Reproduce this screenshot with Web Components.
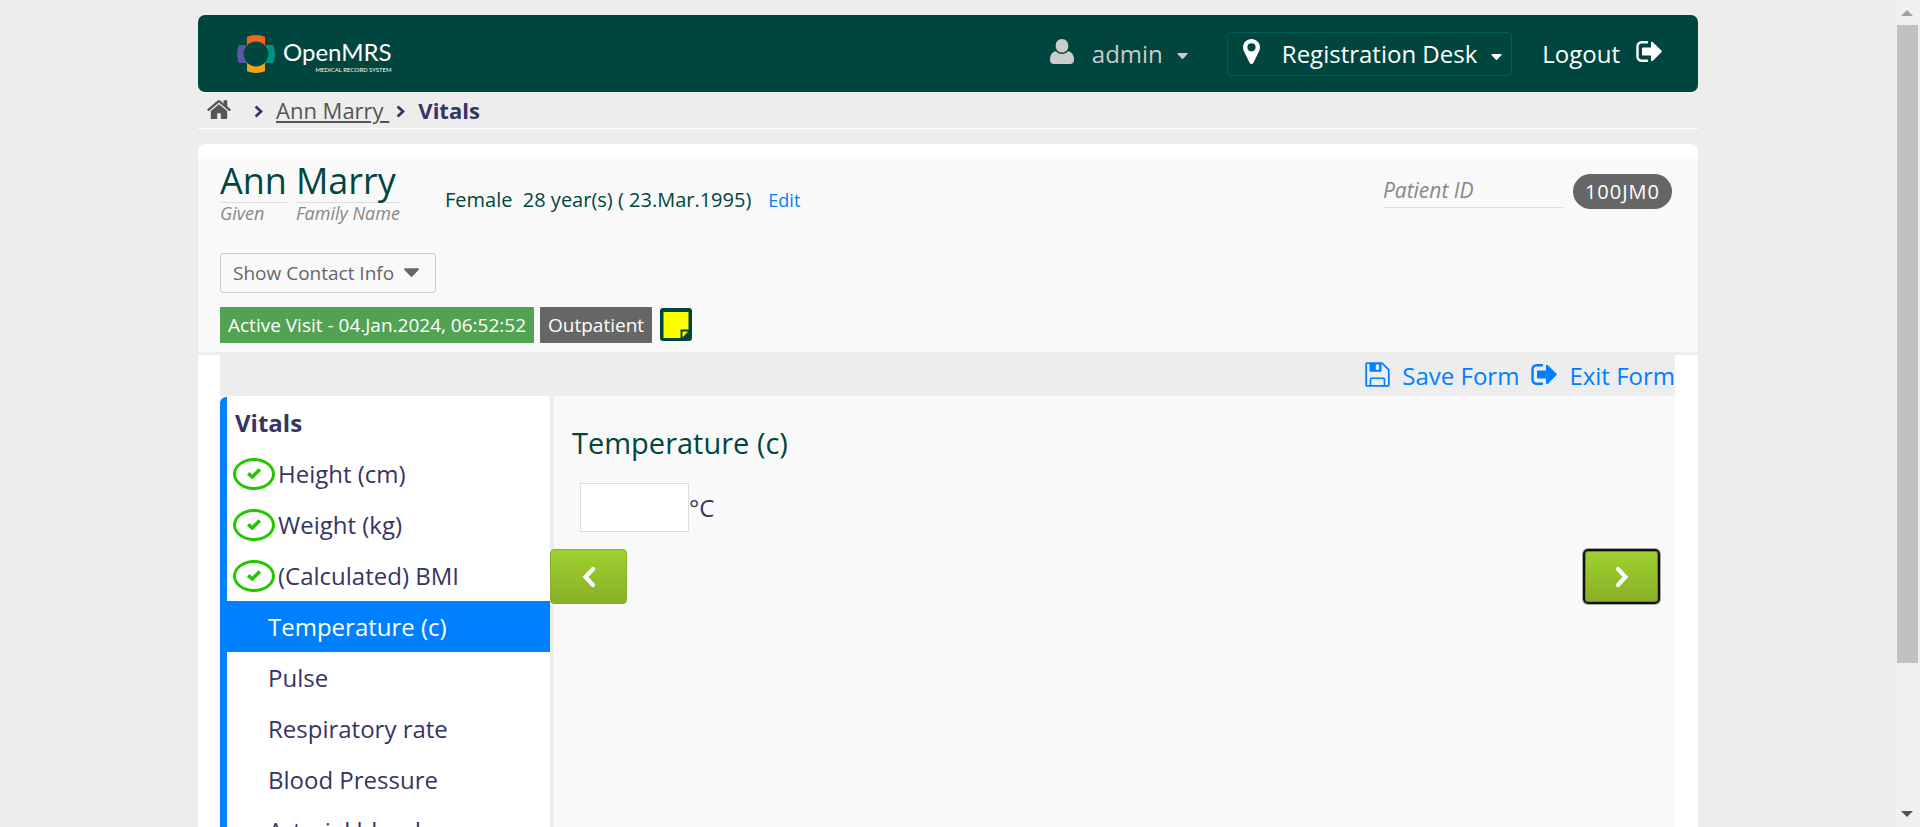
<!DOCTYPE html>
<html lang="en">
<head>
<meta charset="utf-8">
<title>OpenMRS - Vitals</title>
<style>
  html, body { margin: 0; height: 100%; overflow: hidden; }
  body { font-family: "Open Sans", "Noto Sans", sans-serif; font-weight: 400; background: #ededed; color: #363463; }
</style>
</head>
<body>
<emr-app></emr-app>

<script>
const ICONS = {
  user: ['0 0 24 25', '<path d="M12 0c4 0 6.300 3 6.300 7S15.500 13.500 12 13.500 5.700 11 5.700 7 8 0 12 0zM6 12.300C7.600 14 9.500 15 12 15s4.400-1 6-2.700c4 .7 6 3.700 6 8.700 0 2.500-1.500 4-4 4H4c-2.500 0-4-1.500-4-4 0-5 2-8 6-8.700z"/>'],
  pin: ['0 0 17 25', '<path fill-rule="evenodd" d="M8.500 0C13.200 0 17 3.600 17 8.300c0 1.300-.2 2.400-.7 3.400l-6 12.200c-.7 1.400-2.900 1.400-3.600 0l-6-12.200C.2 10.700 0 9.600 0 8.300 0 3.600 3.800 0 8.500 0zm0 4.200a4.100 4.100 0 1 0 0 8.200 4.100 4.100 0 0 0 0-8.200z"/>'],
  exit: ['0 0 26 21', '<path d="M11 1.300H5.500A4 4 0 0 0 1.500 5.300v10.400a4 4 0 0 0 4 4H11" fill="none" stroke="currentColor" stroke-width="2.400" stroke-linecap="round"/><path d="M7 6.500h8V2c0-1.200 1-1.500 1.900-.7l8.500 8.300c.5.500.5 1.200 0 1.700L16.900 19.700c-.9.800-1.900.4-1.900-.7v-4.500H7c-.6 0-1-.4-1-1v-6c0-.6.400-1 1-1z"/>'],
  home: ['0 0 24 19', '<path d="M12 4.300 3.800 11v7c0 .6.400 1 1 1h5.400v-5.800h3.600V19h5.400c.6 0 1-.4 1-1v-7z"/><path d="M23.700 9.200 20.300 6.400V.7c0-.3-.2-.5-.5-.5h-2.700c-.3 0-.5.200-.5.500v2.700L13.300.6c-.8-.6-1.800-.6-2.600 0L.3 9.200c-.2.200-.2.500 0 .7l.9 1c.2.200.5.200.7 0L12 2.600l10.100 8.300c.2.200.5.200.7 0l.9-1c.2-.2.200-.5 0-.7z"/>'],
  right: ['0 0 9 13', '<path d="M1.600 1.500 7 6.500 1.600 11.500" fill="none" stroke="currentColor" stroke-width="2.800"/>'],
  caret: ['0 0 12 7', '<path d="M1 0h10c.9 0 1.200.8.600 1.400L6.700 6.600c-.4.4-1 .4-1.400 0L.4 1.400C-.2.800.100 0 1 0z"/>'],
  save: ['0 0 25 25', '<path d="M1.200 2.200c0-.6.400-1 1-1H17l6.800 6.600v15c0 .6-.4 1-1 1H2.200c-.6 0-1-.4-1-1z" fill="none" stroke="currentColor" stroke-width="1.800"/><path d="M5.500 23.500v-6c0-.8.400-1.200 1.200-1.200h11.600c.8 0 1.200.4 1.200 1.200v6M15 1.500v6.200c0 .7-.4 1-1 1" fill="none" stroke="currentColor" stroke-width="1.600"/><path fill-rule="evenodd" d="M4.500 1h12v7.500c0 .8-.6 1.300-1.300 1.300H5.800c-.7 0-1.300-.5-1.300-1.300zM10.800 2.500v5.300h3.800V2.500z"/>'],
  check: ['0 0 14 11', '<path d="M1.200 5.300 5.300 9 12.800 1.400" fill="none" stroke="currentColor" stroke-width="3.600"/>'],
  prev: ['0 0 14 22', '<path d="M11 3 3.500 11 11 19" fill="none" stroke="currentColor" stroke-width="4.200" stroke-linecap="round"/>'],
  next: ['0 0 14 22', '<path d="M3 3l7.500 8L3 19" fill="none" stroke="currentColor" stroke-width="4.200" stroke-linecap="round"/>'],
  note: ['0 0 32 33', '<rect width="32" height="33" rx="3" fill="#00463f"/><path d="M3.500 4h25v17.500H20.500V30h-17z" fill="#ff0"/><path d="M22.500 23.500h5.500l-5.500 6z" fill="#ff0"/>'],
  emblem: ['0 0 38 38', '<path d="M10 1.800Q19-1.600 28 1.800V11H10z" fill="#f26522"/><path d="M10 36.200q9 3.400 18 0V27H10z" fill="#eea616"/><path d="M1.800 10q-3.400 9 0 18H11V10z" fill="#5b57a6"/><path d="M36.200 10q3.400 9 0 18H27V10z" fill="#009384"/><circle cx="19" cy="19" r="12.400" fill="#00463f"/>']
};

function define(name, css, html) {
  const template = document.createElement('template');
  template.innerHTML = `<style>*{box-sizing:border-box}a{color:inherit;text-decoration:none}button,input{font:inherit;color:inherit;margin:0}${css}</style>${html}`;
  customElements.define(name, class extends HTMLElement {
    constructor() {
      super();
      this.attachShadow({ mode: 'open' }).append(template.content.cloneNode(true));
    }
  });
}

customElements.define('emr-icon', class extends HTMLElement {
  connectedCallback() {
    if (this.shadowRoot) return;
    const [box, shapes] = ICONS[this.getAttribute('name')];
    const [, , w, h] = box.split(' ');
    this.attachShadow({ mode: 'open' }).innerHTML =
      `<style>:host{display:inline-block;flex:none;line-height:0}svg{display:block;fill:currentColor}</style>
       <svg viewBox="${box}" width="${this.getAttribute('width') || w}" height="${this.getAttribute('height') || h}" aria-hidden="true">${shapes}</svg>`;
  }
});

define('emr-logo', `
  :host { display: block; }
  a { display: flex; gap: 8px; align-items: center; color: #fff; }
  .words { display: flex; flex-direction: column; align-items: flex-end; font-family: Lato, sans-serif; padding-top: 3px; }
  .name { font-size: 24px; line-height: 29px; }
  .sub { font-size: 6px; line-height: 7px; }
`, `<a href="#"><emr-icon name="emblem"></emr-icon>
  <span class="words"><span class="name">OpenMRS</span><span class="sub">MEDICAL RECORD SYSTEM</span></span></a>`);

define('emr-header', `
  :host { display: flex; align-items: center; justify-content: space-between; height: 77px; padding: 0 36px 0 39px;
    background: #00463f; border-radius: 7px; color: #fff; font-size: 24px; line-height: 32px; }
  nav { display: flex; align-items: center; }
  button { display: flex; align-items: center; background: none; border: 1px solid transparent; border-radius: 4px; height: 44px; padding: 0; }
  .user { color: #ccc; gap: 18px; margin-right: 38px; }
  .place { border-color: #005f56; padding: 0 9px 0 15px; gap: 22px; margin-right: 30px; }
  .user emr-icon:last-child { margin: 5px 0 0 -4px; }
  .place emr-icon:last-child { margin: 6px 0 0 -8px; }
  .user emr-icon:first-child, .place emr-icon:first-child { margin-bottom: 4px; }
  .out { display: flex; align-items: center; gap: 16px; }
  .out emr-icon { margin-bottom: 4px; }
`, `<emr-logo></emr-logo>
  <nav>
    <button class="user"><emr-icon name="user"></emr-icon>admin<emr-icon name="caret" width="11" height="6"></emr-icon></button>
    <button class="place"><emr-icon name="pin"></emr-icon>Registration Desk<emr-icon name="caret" width="11" height="6"></emr-icon></button>
    <a class="out" href="#">Logout<emr-icon name="exit"></emr-icon></a>
  </nav>`);

define('emr-breadcrumbs', `
  :host { display: flex; align-items: center; height: 37px; padding: 0 9px; border-bottom: 1px solid #fff; font-size: 22px; line-height: 30px; }
  a { color: #555; }
  .home { margin-right: 23px; }
  .person { text-decoration: underline; white-space: pre; margin: 0 7px 0 13px; }
  b { font-weight: 700; margin-left: 13px; }
  emr-icon[name=right] { margin-top: 2px; }
`, `<a class="home" href="#" aria-label="Home"><emr-icon name="home"></emr-icon></a><emr-icon name="right"></emr-icon><a class="person" href="#">Ann Marry </a><emr-icon name="right"></emr-icon><b>Vitals</b>`);

define('emr-patient', `
  :host { display: block; background: #f9f9f9; padding: 0 26px 9px 22px; height: 193px; color: #00463f; }
  .top { display: flex; align-items: flex-start; height: 94px; }
  h1 { margin: 0; display: flex; gap: 9px; font-size: 36px; line-height: 43px; font-weight: 400; }
  h1 span { display: block; }
  h1 i { display: block; border-top: 1px solid #ddd; color: #888; font-size: 18px; line-height: 20px; }
  .facts { margin: 27px 0 0 45px; font-size: 20px; line-height: 28px; white-space: pre; }
  .facts a { color: #007fff; font-size: 18px; margin-left: 17px; }
  .id { margin: 15px 0 0 auto; display: flex; gap: 10px; }
  .id i { width: 180px; height: 34px; border-bottom: 1px solid #ddd; color: #888; font-size: 21px; line-height: 32px; }
  .id b { height: 35px; padding: 0 12px; border-radius: 18px; background: #666; color: #fff; font-size: 20px; font-weight: 400; line-height: 35px; letter-spacing: 1px; }
  button { display: flex; align-items: center; gap: 10px; height: 40px; padding: 0 16px 0 12px; border: 1px solid #ccc; border-radius: 3px; background: none; color: #666; font-size: 19px; }
  button emr-icon { margin-bottom: 2px; }
  .visit { display: flex; align-items: flex-start; gap: 6px; margin-top: 14px; color: #fff; font-size: 19px; line-height: 36px; }
  .visit span { padding: 0 8px; background: #666; border-radius: 1px; }
  .visit .on { background: #51a351; }
  .visit a { margin: 1px 0 0 2px; }
`, `<div class="top">
    <h1><span>Ann<i>Given</i></span><span>Marry<i>Family Name</i></span></h1>
    <div class="facts">Female  28 year(s) ( 23.Mar.1995)<a href="#">Edit</a></div>
    <div class="id"><i>Patient ID</i><b>100JM0</b></div>
  </div>
  <button>Show Contact Info<emr-icon name="caret" width="15" height="9"></emr-icon></button>
  <div class="visit"><span class="on">Active Visit - 04.Jan.2024, 06:52:52</span><span>Outpatient</span><a href="#" aria-label="Note"><emr-icon name="note"></emr-icon></a></div>`);

define('emr-actions', `
  :host { display: flex; justify-content: flex-end; height: 41px; background: #ededed; color: #007fff; font-size: 24px; line-height: 42px; }
  a { display: flex; align-items: center; gap: 12px; }
  a + a { margin-left: 12px; }
  emr-icon { margin-bottom: 3px; }
`, `<a href="#"><emr-icon name="save"></emr-icon>Save Form</a><a href="#"><emr-icon name="exit"></emr-icon>Exit Form</a>`);

define('emr-step', `
  :host { display: block; }
  a { display: flex; align-items: center; height: 51px; padding-left: 41px; font-size: 24px; line-height: 51px; white-space: nowrap; }
  .mark { display: none; align-items: center; justify-content: center; width: 42px; height: 32px; margin-right: 3px; border: 3px solid #24c600; border-radius: 50%; color: #24c600; }
  :host([done]) a { padding-left: 6px; }
  :host([done]) .mark { display: flex; }
  :host([active]) a { background: #007fff; color: #fff; }
  :host([heading]) a { padding-left: 8px; font-weight: 700; }
`, `<a href="#"><span class="mark"><emr-icon name="check"></emr-icon></span><slot></slot></a>`);

define('emr-steps', `
  :host { display: block; width: 330px; flex: none; background: #fff; border-left: 7px solid #007fff; border-top-left-radius: 6px; margin-top: 1px; }
`, `<nav>
    <emr-step heading>Vitals</emr-step>
    <emr-step done>Height (cm)</emr-step>
    <emr-step done>Weight (kg)</emr-step>
    <emr-step done>(Calculated) BMI</emr-step>
    <emr-step active>Temperature (c)</emr-step>
    <emr-step>Pulse</emr-step>
    <emr-step>Respiratory rate</emr-step>
    <emr-step>Blood Pressure</emr-step>
    <emr-step>Arterial blood</emr-step>
  </nav>`);

define('emr-question', `
  :host { display: block; flex: 1; background: #f9f9f9; border-left: 4px solid #ededed; padding: 26px 15px 0 0; }
  h2 { margin: 0 0 19px 18px; font-size: 29px; line-height: 42px; font-weight: 400; color: #00463f; }
  label { display: flex; align-items: center; margin-left: 26px; font-size: 24px; }
  input { width: 109px; height: 49px; border: 1px solid #ddd; background: #fff; }
  .nav { display: flex; justify-content: space-between; margin: 17px 0 0 -4px; }
  button { display: grid; place-items: center; width: 77px; height: 55px; padding: 0; color: #fff;
    border: 1px solid #88af28; border-radius: 4px; background: linear-gradient(#9fd12f, #88af28); }
  .focus { border: 2px solid #101010; border-radius: 5px; box-shadow: inset 0 0 0 1px #6f8f22, 0 0 0 1px #aaa; }
`, `<h2>Temperature (c)</h2>
  <label><input type="text" aria-label="Temperature (c)">°C</label>
  <div class="nav"><button aria-label="Previous"><emr-icon name="prev"></emr-icon></button><button class="focus" aria-label="Next"><emr-icon name="next"></emr-icon></button></div>`);

define('emr-scrollbar', `
  :host { display: flex; flex-direction: column; align-items: center; justify-content: space-between; background: #f0f0f0; border-left: 1px solid #eaeaea; padding: 10px 2px 10px 0; height: 100%; box-sizing: border-box; }
  .thumb { width: 21px; flex: 0 0 79%; margin: 9px 0 auto; background: #c1c1c1; }
  svg { display: block; flex: none; }
`, `<svg width="12" height="6" viewBox="0 0 12 6"><path d="M0 6 6 0l6 6z" fill="#a0a0a0"/></svg><div class="thumb"></div><svg width="12" height="6" viewBox="0 0 12 6"><path d="M0 0h12L6 6z" fill="#505050"/></svg>`);

define('emr-app', `
  :host { display: grid; grid-template-columns: 1fr 25px; grid-template-rows: 100%; height: 100%; }
  .view { overflow: hidden; padding-top: 15px; }
  .page { max-width: 1500px; margin: 0 auto; padding-left: 1px; box-sizing: content-box; }
  .card { margin-top: 15px; padding-top: 15px; background: #fff; border-radius: 7px; }
  .rule { height: 3px; background: #ededed; }
  .form { margin: 0 23px 0 22px; }
  .cols { display: flex; min-height: 500px; }
`, `<div class="view"><div class="page">
    <emr-header></emr-header>
    <emr-breadcrumbs></emr-breadcrumbs>
    <main class="card">
      <emr-patient></emr-patient>
      <div class="rule"></div>
      <div class="form">
        <emr-actions></emr-actions>
        <div class="cols"><emr-steps></emr-steps><emr-question></emr-question></div>
      </div>
    </main>
  </div></div>
  <emr-scrollbar></emr-scrollbar>`);
</script>
</body>
</html>
